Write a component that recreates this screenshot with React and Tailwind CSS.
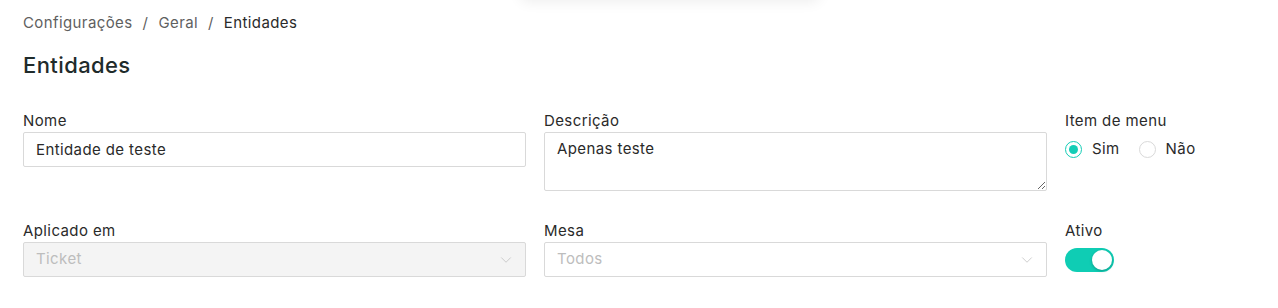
import { ChevronDown } from 'lucide-react';

const font = { fontFamily: 'Inter, "Noto Sans", sans-serif', letterSpacing: '0.4px' };

function Label({ children }) {
    return <div className="text-[15px] leading-[18px] text-[#2a2a2a] mb-[2px]">{children}</div>;
}

function Radio({ checked, label }) {
    return (
        <label className="flex items-center gap-[10px] text-[15px] text-[#2a2a2a]">
            <span className={`w-[17px] h-[17px] rounded-full border flex items-center justify-center bg-white ${checked ? 'border-[#14cdb6]' : 'border-[#d9d9d9]'}`}>
                {checked && <span className="w-[9px] h-[9px] rounded-full bg-[#14cdb6]" />}
            </span>
            {label}
        </label>
    );
}

export default function App() {
    return (
        <div className="relative w-[1278px] h-[308px] bg-white overflow-hidden" style={font}>
            {/* shadow of a floating element above the viewport */}
            <div className="absolute left-[520px] top-[-40px] w-[300px] h-[40px] rounded-lg bg-white shadow-[0_2px_14px_rgba(0,0,0,0.07)]" />

            <div className="px-[23px] pt-[13px]">
                <div className="flex items-center gap-[10px] text-[15px] leading-[20px] text-[#5f5f5f]">
                    <span>Configurações</span>
                    <span>/</span>
                    <span>Geral</span>
                    <span>/</span>
                    <span className="text-[#2a2a2a]">Entidades</span>
                </div>

                <h1 className="mt-[19px] text-[22px] leading-[26px] font-medium text-[#1f2b2b]">Entidades</h1>

                <div className="mt-[34px] grid grid-cols-[503px_503px_1fr] gap-x-[18px]">
                    <div>
                        <Label>Nome</Label>
                        <input
                            readOnly
                            value="Entidade de teste"
                            className="w-full h-[35px] px-[12px] border border-[#d9d9d9] rounded-[2px] text-[15px] text-[#2a2a2a] outline-none"
                            style={font}
                        />
                    </div>
                    <div>
                        <Label>Descrição</Label>
                        <textarea
                            readOnly
                            value="Apenas teste"
                            className="block w-full h-[59px] px-[12px] py-[5px] border border-[#d9d9d9] rounded-[2px] text-[15px] leading-[22px] text-[#2a2a2a] outline-none resize-y"
                            style={font}
                        />
                    </div>
                    <div>
                        <Label>Item de menu</Label>
                        <div className="flex items-center gap-[19px] h-[35px]">
                            <Radio checked label="Sim" />
                            <Radio label="Não" />
                        </div>
                    </div>

                    <div className="mt-[31px]">
                        <Label>Aplicado em</Label>
                        <div className="flex items-center justify-between h-[35px] pl-[12px] pr-[10px] border border-[#d9d9d9] rounded-[2px] bg-[#f4f4f4] text-[15px] text-[#bdbdbd]">
                            <span>Ticket</span>
                            <ChevronDown size={18} strokeWidth={1} className="text-[#bdbdbd]" />
                        </div>
                    </div>
                    <div className="mt-[31px]">
                        <Label>Mesa</Label>
                        <div className="flex items-center justify-between h-[35px] pl-[12px] pr-[10px] border border-[#d9d9d9] rounded-[2px] bg-white text-[15px] text-[#bdbdbd]">
                            <span>Todos</span>
                            <ChevronDown size={18} strokeWidth={1} className="text-[#bdbdbd]" />
                        </div>
                    </div>
                    <div className="mt-[31px]">
                        <Label>Ativo</Label>
                        <div className="h-[35px] flex items-center">
                            <div className="w-[49px] h-[24px] rounded-full bg-[#0fcdb4] flex items-center justify-end px-[2px]">
                                <span className="w-[20px] h-[20px] rounded-full bg-white shadow-[0_1px_3px_rgba(0,0,0,0.25)]" />
                            </div>
                        </div>
                    </div>
                </div>
            </div>
        </div>
    );
}
